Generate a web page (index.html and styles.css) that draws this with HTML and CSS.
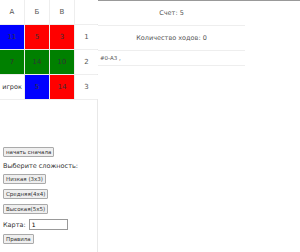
FILE: index.html
```html
<!DOCTYPE html>
<html lang="ru">
<head>
  <meta charset="UTF-8" />
  <title>Игра</title>
  <link rel="stylesheet" href="styles.css">
</head>
<body>
  <div class="page">
    <div class="left">
      <div class="board">
        <div class="cell head">А</div>
        <div class="cell head">Б</div>
        <div class="cell head">В</div>
        <div class="cell"></div>

        <div class="cell blue">11</div>
        <div class="cell red">5</div>
        <div class="cell red">3</div>
        <div class="cell num">1</div>

        <div class="cell green">7</div>
        <div class="cell green">14</div>
        <div class="cell green">10</div>
        <div class="cell num">2</div>

        <div class="cell player">игрок</div>
        <div class="cell blue">5</div>
        <div class="cell red">14</div>
        <div class="cell num">3</div>
      </div>

      <div class="controls">
        <button class="btn">начать сначала</button>
        <div class="label">Выберите сложность:</div>
        <button class="btn">Низкая (3x3)</button>
        <button class="btn">Средняя(4x4)</button>
        <button class="btn">Высокая(5x5)</button>
        <div class="map">
          <span class="label">Карта:</span>
          <input type="text" class="map-input" value="1" />
        </div>
        <button class="btn">Правила</button>
      </div>
    </div>

    <div class="right">
      <table class="info">
        <tr><td class="center">Счет: 5</td></tr>
        <tr><td class="center">Количество ходов: 0</td></tr>
        <tr><td class="log">#0-А3 ,</td></tr>
      </table>
    </div>
  </div>
</body>
</html>
```

FILE: styles.css
```css
body {
  margin: 0;
  font-family: "DejaVu Sans", Verdana, sans-serif;
  color: #333;
  background: #fff;
}

.page {
  display: flex;
  height: 252px;
}

.left {
  width: 97px;
  border-right: 1px solid #e8e8e8;
}

.board {
  display: grid;
  grid-template-columns: 24px 24px 24px 23px;
  grid-auto-rows: 24px;
  gap: 1px;
  background: #eeeeee;
  border-bottom: 1px solid #eeeeee;
}

.cell {
  background: #fff;
  display: flex;
  align-items: center;
  justify-content: center;
  font-size: 7px;
  color: #333;
}

.head {
  color: #555;
}

.num {
  color: #555;
}

.blue {
  background: #0000ff;
}

.red {
  background: #ff0000;
}

.green {
  background: #008000;
}

.player {
  font-size: 6.5px;
}

.controls {
  display: flex;
  flex-direction: column;
  align-items: flex-start;
  padding: 47px 0 0 3px;
}

.btn {
  font-family: "DejaVu Sans", Verdana, sans-serif;
  font-size: 5.5px;
  color: #333;
  height: 10px;
  padding: 0 2px;
  background: #efefef;
  border: 1px solid #aaa;
  border-radius: 1px;
  margin-bottom: 5px;
}

.label {
  font-size: 6.5px;
  color: #333;
}

.controls > .label {
  margin: 0 0 4px;
}

.map {
  display: flex;
  align-items: center;
  gap: 3px;
  margin-bottom: 4px;
}

.map-input {
  width: 33px;
  height: 9px;
  padding: 0 2px;
  font-size: 6px;
  border: 1px solid #999;
  font-family: "DejaVu Sans", Verdana, sans-serif;
}

.right {
  flex: 1;
  border-top: 1px solid #999;
}

.info {
  width: 147px;
  border-collapse: collapse;
  font-size: 6.5px;
  color: #555;
}

.info td {
  border-bottom: 1px solid #eeeeee;
  padding: 0;
  color: #555;
}

.info .center {
  text-align: center;
  height: 24px;
}

.info .log {
  text-align: left;
  font-size: 5.5px;
  height: 14px;
  padding-left: 2px;
}
```
